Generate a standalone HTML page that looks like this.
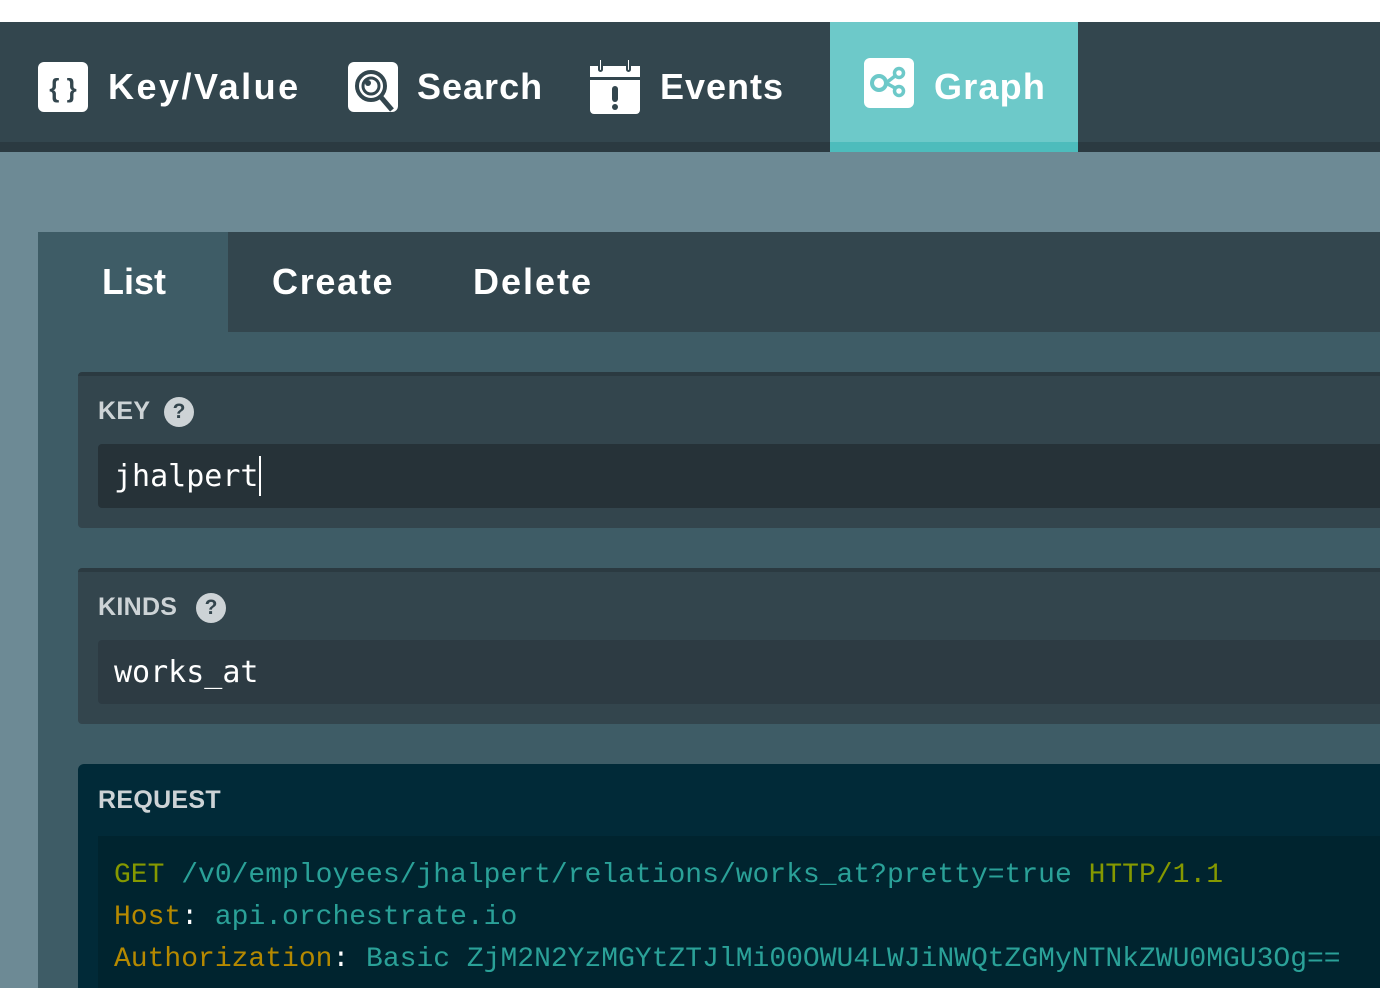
<!DOCTYPE html>
<html><head><meta charset="utf-8"><style>
*{margin:0;padding:0;box-sizing:border-box}
body{width:1380px;height:988px;overflow:hidden;background:#6d8a95;font-family:"Liberation Sans",sans-serif;position:relative}
.abs{position:absolute}
.nav{left:0;top:22px;width:1380px;height:130px;background:#33464e;border-bottom:10px solid #2b3a41}
.top{left:0;top:0;width:1380px;height:22px;background:#fff}
.ni{position:absolute;top:66px;color:#fff;font-weight:bold;font-size:36px;letter-spacing:1px}
.ico{position:absolute;top:62px;width:50px;height:50px;background:#fff;border-radius:6px}
.graph{left:830px;top:22px;width:248px;height:130px;background:#6dc9c9;border-bottom:10px solid #4dbcbc}
.panel{left:38px;top:232px;width:1342px;height:756px;background:#3e5c66}
.tabs{left:38px;top:232px;width:1342px;height:100px;background:#33464e}
.tab{position:absolute;top:261px;color:#fff;font-weight:bold;font-size:36px}
.box{left:78px;width:1302px;background:#33454d;border-top:4px solid #2b3a41;border-radius:4px 0 0 4px}
.lbl{position:absolute;left:20px;color:#cdd3d6;font-weight:bold;font-size:25px;letter-spacing:0.3px}
.q{position:absolute;width:30px;height:30px;border-radius:50%;background:#cdd3d6;color:#33454d;font-weight:bold;font-size:21px;text-align:center;line-height:30px}
.inp{position:absolute;left:20px;width:1282px;height:64px;border-radius:4px 0 0 4px;font-family:"DejaVu Sans Mono",monospace;font-size:30px;color:#fff;padding-left:16px;line-height:64px}
.code{font-family:"Liberation Mono",monospace;font-size:28px;line-height:42px;color:#2aa198;white-space:pre}
.y{color:#859900}.o{color:#b58900}.w{color:#fff}
</style></head><body>
<div class="abs top"></div>
<div class="abs nav"></div>
<div class="abs graph"></div>
<div class="ico" style="left:38px;top:62px"><svg width="50" height="50"><text x="25" y="35" text-anchor="middle" font-family="Liberation Sans" font-weight="bold" font-size="26" fill="#33464e">{ }</text></svg></div>
<div class="ni" style="left:108px;letter-spacing:2.5px">Key/Value</div>
<div class="ico" style="left:348px;top:62px"><svg width="50" height="50"><circle cx="23" cy="24" r="14" fill="none" stroke="#33464e" stroke-width="4"/><circle cx="23" cy="24" r="8" fill="none" stroke="#33464e" stroke-width="3"/><circle cx="20" cy="21" r="3" fill="#33464e"/><path d="M32 34 L44 48" stroke="#33464e" stroke-width="5"/></svg></div>
<div class="ni" style="left:417px">Search</div>
<div class="ico" style="left:590px;top:66px;height:48px;border-radius:4px"><svg width="50" height="48"><rect x="0" y="0" width="50" height="11" fill="#fff"/><rect x="0" y="11" width="50" height="3" fill="#33464e"/><rect x="22" y="20" width="6" height="16" rx="3" fill="#33464e"/><circle cx="25" cy="41" r="3" fill="#33464e"/></svg></div>
<div class="abs" style="left:598px;top:58px;width:5px;height:14px;border:2px solid #33464e;background:#fff;border-radius:0 0 3px 3px"></div>
<div class="abs" style="left:626px;top:58px;width:5px;height:14px;border:2px solid #33464e;background:#fff;border-radius:0 0 3px 3px"></div>
<div class="ni" style="left:660px">Events</div>
<div class="ico" style="left:864px;top:58px;width:50px;height:50px"><svg width="50" height="50"><circle cx="15" cy="25" r="7" fill="none" stroke="#6dc9c9" stroke-width="4"/><circle cx="35" cy="15" r="4.5" fill="none" stroke="#6dc9c9" stroke-width="3.5"/><circle cx="35" cy="33" r="4.5" fill="none" stroke="#6dc9c9" stroke-width="3.5"/><path d="M22 25 L31 18 M22 25 L31 30" stroke="#6dc9c9" stroke-width="3.5"/></svg></div>
<div class="ni" style="left:934px;letter-spacing:1.2px">Graph</div>

<div class="abs panel"></div>
<div class="abs tabs"></div>
<div class="abs" style="left:38px;top:232px;width:190px;height:100px;background:#3e5c66"></div>
<div class="tab" style="left:102px">List</div>
<div class="tab" style="left:272px;letter-spacing:1.7px">Create</div>
<div class="tab" style="left:473px;letter-spacing:2px">Delete</div>

<div class="abs box" style="top:372px;height:156px">
 <div class="lbl" style="top:21px">KEY</div><div class="q" style="left:86px;top:21px">?</div>
 <div class="inp" style="top:68px;background:#263238;line-height:66px">jhalpert<span style="display:inline-block;width:2px;height:40px;background:#fff;vertical-align:middle;margin-top:-4px"></span></div>
</div>
<div class="abs box" style="top:568px;height:156px">
 <div class="lbl" style="top:21px">KINDS</div><div class="q" style="left:118px;top:21px">?</div>
 <div class="inp" style="top:68px;background:#2d3b43;line-height:66px">works_at</div>
</div>
<div class="abs" style="left:78px;top:764px;width:1302px;height:224px;background:#012a38;border-radius:6px 0 0 0">
 <div class="lbl" style="top:22px">REQUEST</div>
 <div class="abs" style="left:20px;top:72px;width:1282px;height:152px;background:#00242f;padding:19px 0 0 16px">
<div class="code"><span class="y">GET</span> /v0/employees/jhalpert/relations/works_at?pretty=true <span class="y">HTTP/1.1</span>
<span class="o">Host</span><span class="w">:</span> api.orchestrate.io
<span class="o">Authorization</span><span class="w">:</span> Basic ZjM2N2YzMGYtZTJlMi00OWU4LWJiNWQtZGMyNTNkZWU0MGU3Og==</div>
 </div>
</div>
</body></html>
